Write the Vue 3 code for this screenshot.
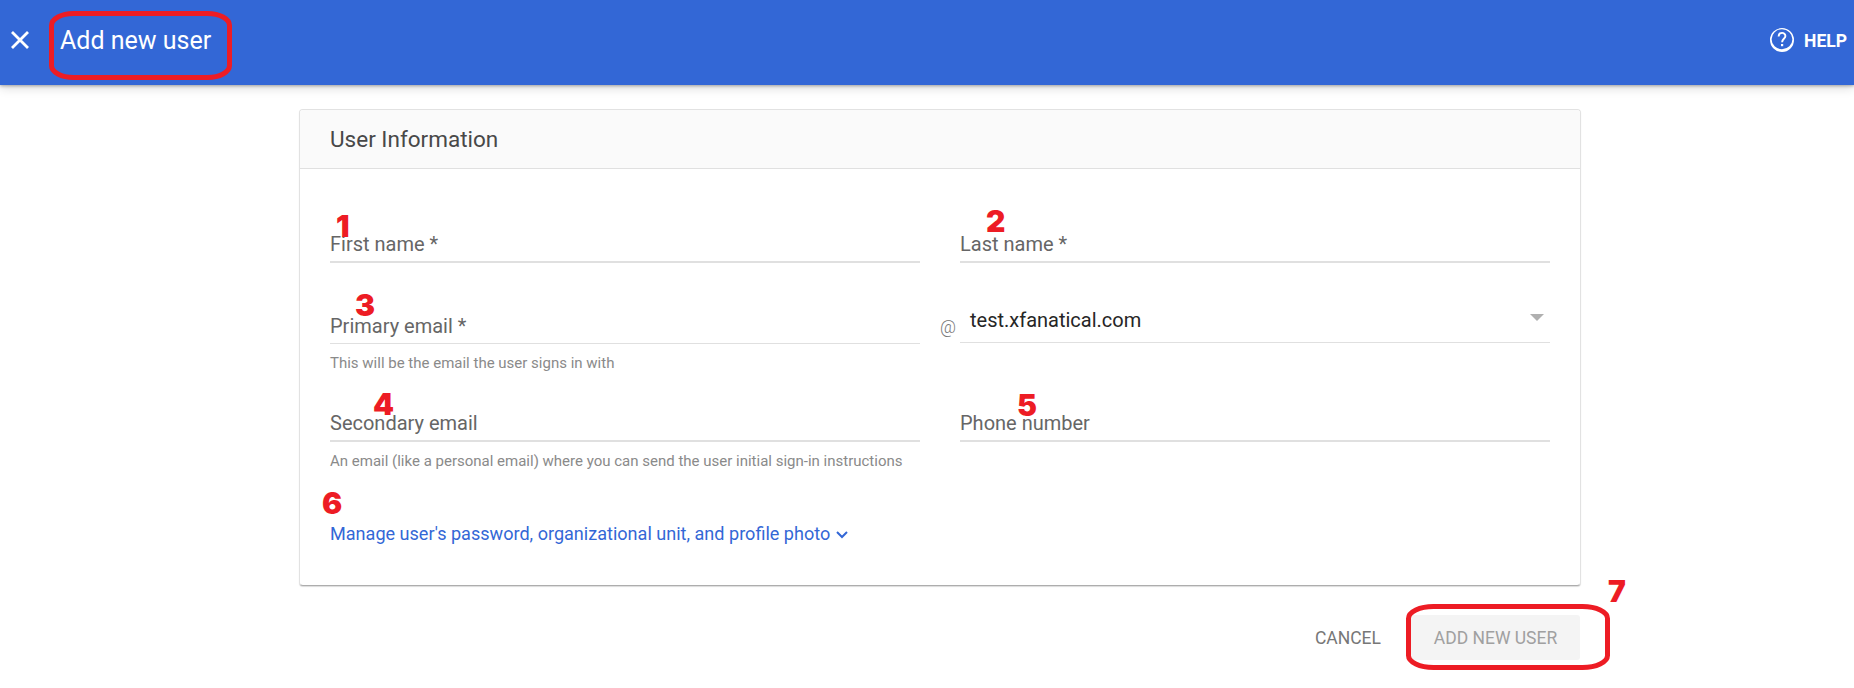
<script setup>
import { ref } from 'vue'

const domain = ref('test.xfanatical.com')

// step markers drawn over the form
const steps = [
    { id: 1, x: 336, y: 208 },
    { id: 2, x: 986, y: 203 },
    { id: 3, x: 355, y: 287 },
    { id: 4, x: 373, y: 386 },
    { id: 5, x: 1017, y: 387 },
    { id: 6, x: 322, y: 485 },
    { id: 7, x: 1608, y: 573 },
]
</script>

<template>
    <div class="page">
        <header class="topbar">
            <svg class="close" viewBox="0 0 20 20">
                <path d="M2 2 L18 18 M18 2 L2 18" />
            </svg>
            <h1 class="title">Add new user</h1>
            <div class="help">
                <svg class="help-icon" viewBox="0 0 24 24">
                    <path
                        fill-rule="evenodd"
                        d="M12 0a12 12 0 1 0 0 24a12 12 0 1 0 0-24zM12 1.2a10.4 10 0 1 1 0 20a10.4 10 0 1 1 0-20z"
                    />
                    <path class="mark" d="M8.6 8.4c0-4.6 6.8-4.5 6.8-.5c0 2.8-3.3 3-3.3 6.3" />
                    <rect x="11" y="16" width="2.2" height="2.2" />
                </svg>
                <span class="help-text">HELP</span>
            </div>
        </header>

        <main class="content">
            <section class="card">
                <h2 class="card-title">User Information</h2>
                <div class="row row-names">
                    <div class="field">
                        <div class="control"><span>First name *</span></div>
                    </div>
                    <div class="field">
                        <div class="control"><span>Last name *</span></div>
                    </div>
                </div>
                <div class="row row-email">
                    <div class="field">
                        <div class="control thin"><span>Primary email *</span></div>
                        <div class="hint">This will be the email the user signs in with</div>
                    </div>
                    <span class="at">@</span>
                    <div class="field">
                        <div class="control select">
                            <span>{{ domain }}</span>
                            <svg class="arrow" viewBox="0 0 14 7"><path d="M0 0h14L7 7z" /></svg>
                        </div>
                    </div>
                </div>
                <div class="row row-contact">
                    <div class="field">
                        <div class="control"><span>Secondary email</span></div>
                        <div class="hint">An email (like a personal email) where you can send the user initial sign-in instructions</div>
                    </div>
                    <div class="field">
                        <div class="control"><span>Phone number</span></div>
                    </div>
                </div>
                <a class="manage">
                    <span>Manage user's password, organizational unit, and profile photo</span>
                    <svg class="chevron" viewBox="0 0 12 8"><path d="M1 1l5 5l5-5" /></svg>
                </a>
            </section>

            <div class="actions">
                <button class="cancel">CANCEL</button>
                <button class="submit">ADD NEW USER</button>
            </div>
        </main>

        <svg class="ring ring-title" viewBox="0 0 183 69">
            <rect x="2.5" y="2.5" width="178" height="64" rx="22" ry="12" />
        </svg>
        <svg class="ring ring-submit" viewBox="0 0 204 66">
            <rect x="2.5" y="2.5" width="199" height="61" rx="25" ry="12" />
        </svg>
        <span
            v-for="step in steps"
            :key="step.id"
            class="step"
            :style="{ left: step.x + 'px', top: step.y + 'px' }"
        >{{ step.id }}</span>
    </div>
</template>

<style>
body {
    background: #fff;
}
</style>

<style scoped>
.page {
    position: relative;
    height: 688px;
    overflow: hidden;
    font-family: Roboto, "Liberation Sans", sans-serif;
    font-size: 20px;
    line-height: 24px;
    color: #666;
    white-space: nowrap;
}

.topbar {
    display: flex;
    align-items: center;
    box-sizing: border-box;
    height: 85px;
    padding: 0 7px 5px 10px;
    background: #3367d6;
    color: #fff;
    box-shadow: 0 1px 3px rgba(0, 0, 0, 0.3), 0 3px 10px rgba(0, 0, 0, 0.14);
}

.close {
    width: 20px;
    height: 20px;
    fill: none;
    stroke: #fff;
    stroke-width: 2.8;
}

.title {
    margin: 0 0 0 30px;
    padding-top: 2px;
    font-size: 25px;
    font-weight: 400;
    line-height: 30px;
}

.help {
    display: flex;
    align-items: center;
    gap: 10px;
    margin-left: auto;
    font-size: 17.5px;
    font-weight: 700;
}

.help-text {
    padding-top: 2px;
}

.help-icon {
    width: 24px;
    height: 24px;
    fill: #fff;
}

.help-icon .mark {
    fill: none;
    stroke: #fff;
    stroke-width: 1.9;
}

.content {
    width: 1282px;
    margin: 24px 0 0 299px;
}

.card {
    box-sizing: border-box;
    height: 477px;
    border: 1px solid #e2e2e2;
    border-bottom-color: #adadad;
    border-radius: 4px;
    background: #fff;
    box-shadow: 0 1px 1px rgba(0, 0, 0, 0.14);
}

.card-title {
    box-sizing: border-box;
    height: 59px;
    margin: 0;
    padding: 14px 30px 0;
    border-bottom: 1px solid #e0e0e0;
    border-radius: 3px 3px 0 0;
    background: #fafafa;
    color: #484848;
    font-size: 22.5px;
    font-weight: 400;
    line-height: 30px;
}

.row {
    display: flex;
    justify-content: space-between;
    padding: 0 30px;
}

.row-names {
    height: 94px;
}

.row-email {
    height: 115px;
}

.row-contact {
    height: 144px;
}

.field {
    width: 590px;
}

.control {
    display: flex;
    align-items: flex-end;
    justify-content: space-between;
    box-sizing: border-box;
    padding-bottom: 5px;
    border-bottom: 2px solid #e0e0e0;
}

.row-names .control {
    height: 94px;
}

.row-email .control {
    height: 81px;
}

.row-contact .control {
    height: 64px;
}

.row-email .control.thin {
    border-bottom-width: 1px;
}

.row-email .control.select {
    height: 80px;
    padding: 0 6px 10px 10px;
    border-bottom-width: 1px;
    color: #262626;
}

.arrow {
    width: 14px;
    height: 7px;
    margin-bottom: 11px;
    fill: #b0b0b0;
}

.at {
    box-sizing: border-box;
    width: 40px;
    padding: 52px 4px 0 0;
    text-align: right;
    color: #777;
    font-size: 17.5px;
    font-weight: 300;
}

.hint {
    margin-top: 9px;
    color: #8a8a8a;
    font-size: 15px;
    line-height: 20px;
}

.manage {
    display: flex;
    align-items: center;
    gap: 6px;
    padding-left: 30px;
    color: #3367d6;
    font-size: 18.07px;
}

.chevron {
    width: 12px;
    height: 8px;
    margin-top: 2px;
    fill: none;
    stroke: #3367d6;
    stroke-width: 2;
}

.actions {
    display: flex;
    justify-content: flex-end;
    margin-top: 29px;
    padding-right: 1px;
}

button {
    height: 45px;
    border: 0;
    border-radius: 3px;
    background: none;
    font: 400 17.5px/24px Roboto, "Liberation Sans", sans-serif;
}

.cancel {
    padding: 0 29px 0 30px;
    color: #777;
}

.submit {
    width: 170px;
    padding: 0 0 0 1px;
    background: #f4f4f4;
    color: #a0a0a0;
}

.ring {
    position: absolute;
    fill: none;
    stroke: #ed1c24;
    stroke-width: 5;
}

.ring-title {
    left: 49px;
    top: 11px;
    width: 183px;
    height: 69px;
}

.ring-submit {
    left: 1406px;
    top: 604px;
    width: 204px;
    height: 66px;
}

.step {
    position: absolute;
    color: #ed1c24;
    font-family: Inter, "Liberation Sans", sans-serif;
    font-size: 30px;
    font-weight: 900;
    line-height: 36px;
}
</style>
